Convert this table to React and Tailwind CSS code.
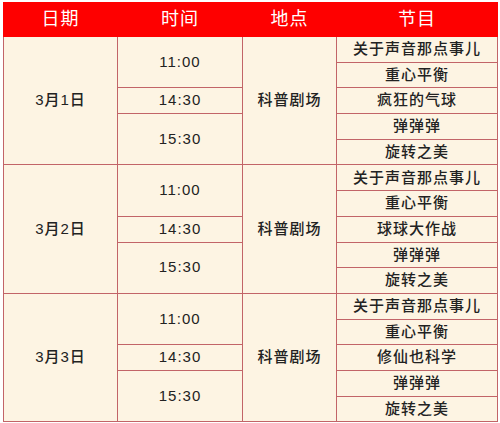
import React from 'react';

const groups = [
  { date: '3月1日', shows: ['关于声音那点事儿', '重心平衡', '疯狂的气球', '弹弹弹', '旋转之美'] },
  { date: '3月2日', shows: ['关于声音那点事儿', '重心平衡', '球球大作战', '弹弹弹', '旋转之美'] },
  { date: '3月3日', shows: ['关于声音那点事儿', '重心平衡', '修仙也科学', '弹弹弹', '旋转之美'] },
];

const font = { fontFamily: '"Liberation Sans", "Noto Sans CJK SC", sans-serif' };

const cell = 'border border-[#c26468] bg-[#fdf4e3] text-center align-middle text-[15px] tracking-[1px] font-medium text-[#222] p-0';
const head = 'border border-[#fe0000] bg-[#fe0000] text-center align-middle text-[18px] tracking-[1px] font-normal text-white p-0';

const App = () => {
  return (
    <div className="w-[500px] h-[423px] bg-white pt-[2px] pl-[3px]" style={font}>
      <table className="table-fixed border-collapse w-[494px]">
        <colgroup>
          <col className="w-[114px]" />
          <col className="w-[125px]" />
          <col className="w-[94px]" />
          <col className="w-[161px]" />
        </colgroup>
        <thead>
          <tr className="h-[34px]">
            <th className={head}>日期</th>
            <th className={head}>时间</th>
            <th className={head}>地点</th>
            <th className={head}>节目</th>
          </tr>
        </thead>
        <tbody>
          {groups.map((g) =>
            g.shows.map((show, i) => (
              <tr key={g.date + i} className="h-[25.7px]">
                {i === 0 && (
                  <td rowSpan={5} className={cell}>{g.date}</td>
                )}
                {i === 0 && <td rowSpan={2} className={cell}>11:00</td>}
                {i === 2 && <td className={cell}>14:30</td>}
                {i === 3 && <td rowSpan={2} className={cell}>15:30</td>}
                {i === 0 && (
                  <td rowSpan={5} className={cell}>科普剧场</td>
                )}
                <td className={cell}>{show}</td>
              </tr>
            ))
          )}
        </tbody>
      </table>
    </div>
  );
};

export default App;
